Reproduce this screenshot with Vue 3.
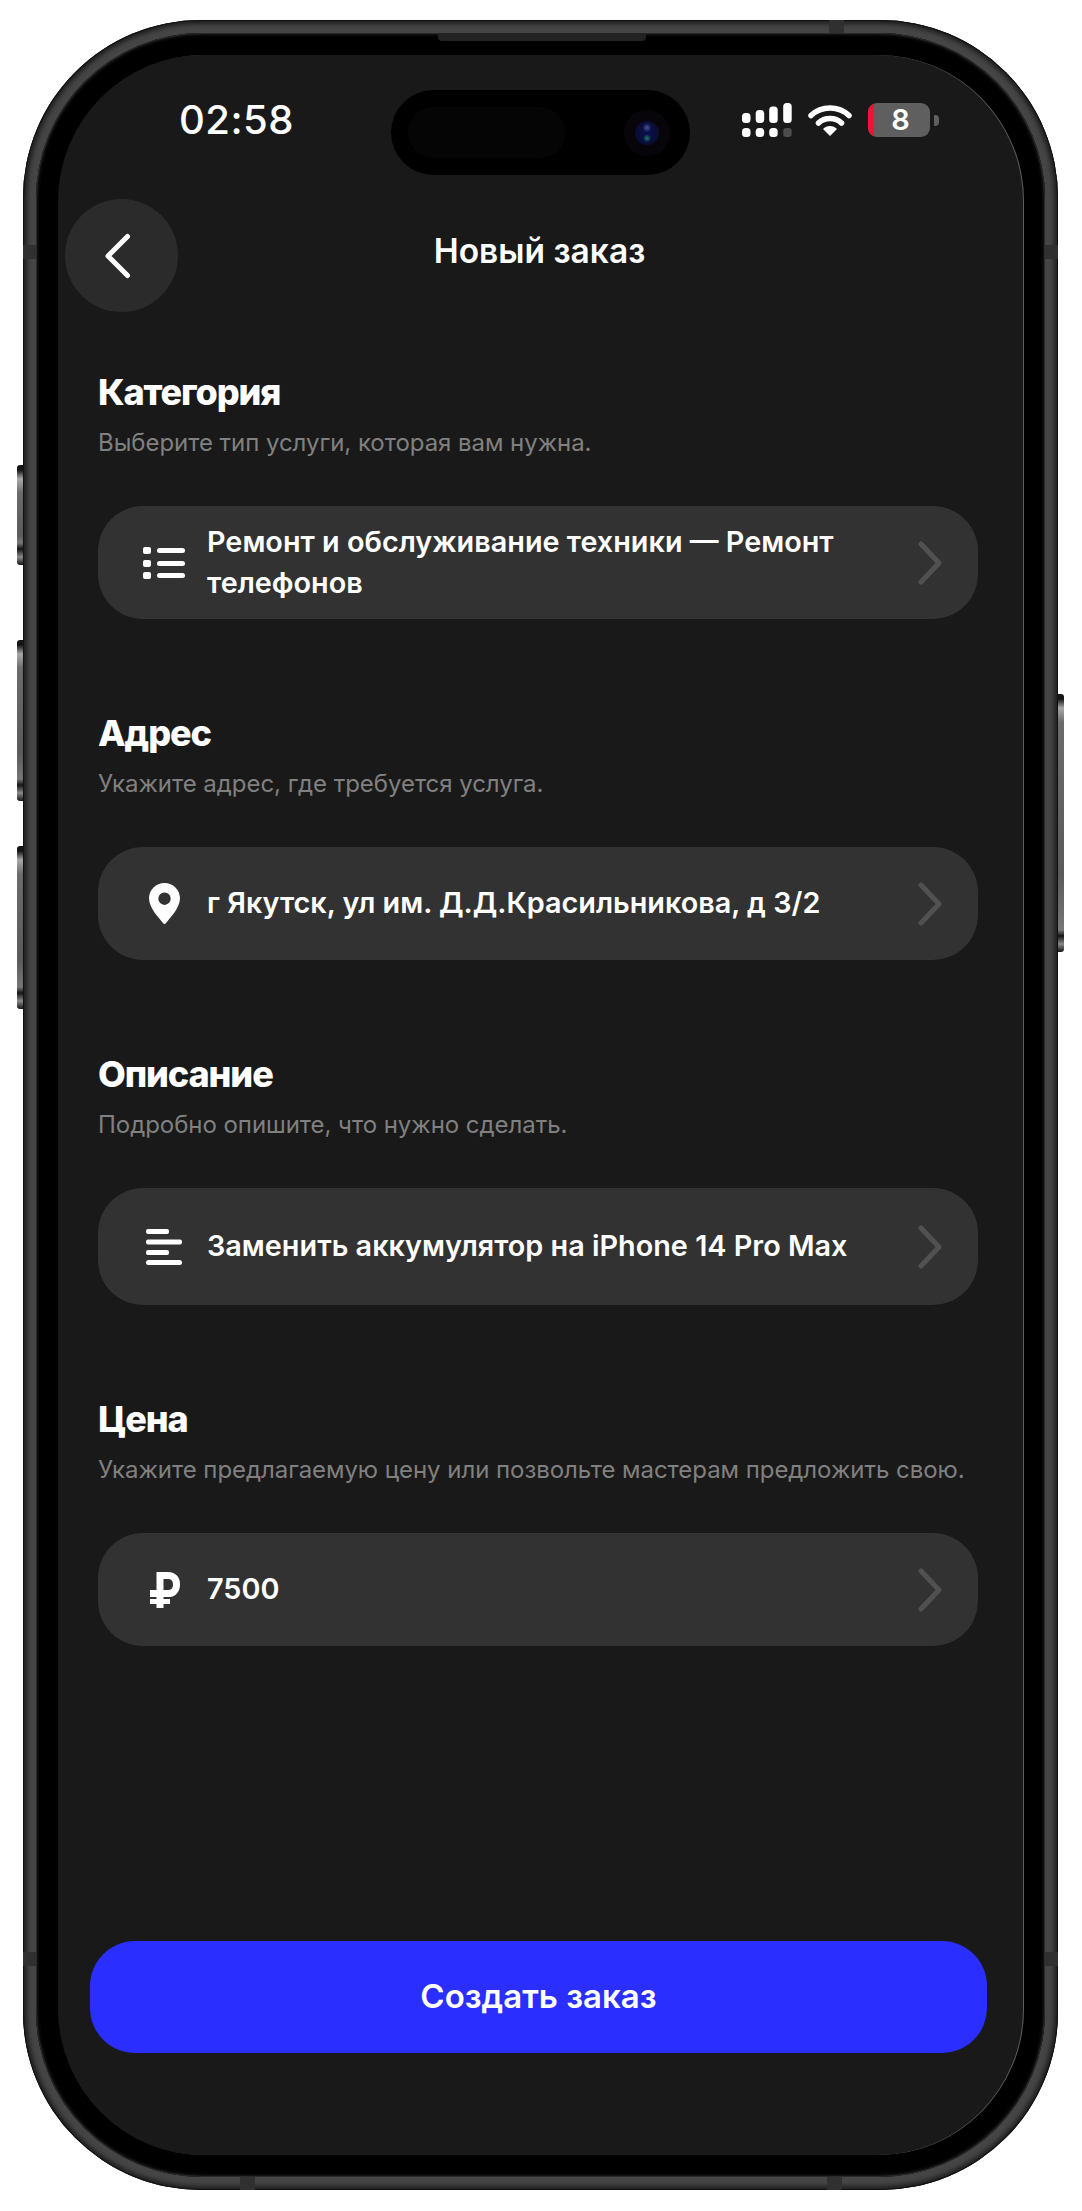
<template>
  <div class="page">
    <div class="phone">
      <span class="side side-l b1"></span>
      <span class="side side-l b2"></span>
      <span class="side side-l b3"></span>
      <span class="side side-r b4"></span>
      <span class="band v tl"></span>
      <span class="band v tr"></span>
      <span class="band v bl"></span>
      <span class="band v br"></span>
      <span class="band h top"></span>
      <span class="band h bot1"></span>
      <span class="band h bot2"></span>
      <span class="speaker"></span>

      <div class="bezel">
        <div class="screen">
          <div class="island">
            <span class="island-left"></span>
            <span class="lens"><span class="lens-in"></span></span>
          </div>

          <div class="status">
            <span class="time">02:58</span>
            <div class="status-right">
              <svg class="signal" width="50" height="34" viewBox="0 0 50 34">
                <g fill="#fff">
                  <rect x="0" y="10" width="8.500" height="10" rx="3.500" />
                  <rect x="13.700" y="7" width="8.500" height="13" rx="3.500" />
                  <rect x="27.200" y="3.500" width="8.500" height="16.500" rx="3.500" />
                  <rect x="41.200" y="0" width="8.500" height="20" rx="3.500" />
                  <rect x="0" y="25" width="8.500" height="9" rx="3.500" />
                  <rect x="13.700" y="25" width="8.500" height="9" rx="3.500" />
                  <rect x="27.200" y="25" width="8.500" height="9" rx="3.500" />
                  <rect x="41.200" y="25" width="8.500" height="9" rx="3" fill="#4c4c4c" />
                </g>
              </svg>
              <svg class="wifi" width="44" height="32" viewBox="0 0 44 32">
                <path d="M3 11.500C13.500 1.500 30.500 1.500 41 11.500" fill="none" stroke="#fff" stroke-width="5.500" stroke-linecap="round" />
                <path d="M10.500 19C16.500 13 27.500 13 33.500 19" fill="none" stroke="#fff" stroke-width="5.500" stroke-linecap="round" />
                <path d="M15 25C18.500 21 25.500 21 29 25L22 32Z" fill="#fff" />
              </svg>
              <div class="battery">
                <div class="battery-body"><span class="battery-red"></span>8</div>
                <span class="battery-tip"></span>
              </div>
            </div>
          </div>

          <div class="header">
            <button class="back">
              <svg width="28" height="46" viewBox="0 0 28 46">
                <path d="M24.500 3.500L5 23L24.500 42.500" fill="none" stroke="#fff" stroke-width="5" stroke-linecap="round" stroke-linejoin="round" />
              </svg>
            </button>
            <div class="title">Новый заказ</div>
          </div>

          <div class="form">
            <div v-for="s in sections" :key="s.title" class="section">
              <h2>{{ s.title }}</h2>
              <p>{{ s.hint }}</p>
              <div class="card" :class="{ tall: s.icon === 'text' }">
                <span class="icon">
                  <svg v-if="s.icon === 'list'" width="42" height="32" viewBox="0 0 42 32">
                    <g fill="#fff">
                      <rect x="0" y="0" width="8" height="7" rx="2" />
                      <rect x="0" y="13" width="8" height="7" rx="2" />
                      <rect x="0" y="25" width="8" height="7" rx="2" />
                      <rect x="14" y="1" width="28" height="5" rx="2.500" />
                      <rect x="14" y="14" width="28" height="5" rx="2.500" />
                      <rect x="14" y="26" width="28" height="5" rx="2.500" />
                    </g>
                  </svg>
                  <svg v-else-if="s.icon === 'pin'" width="31" height="41" viewBox="0 0 31 41">
                    <path fill="#fff" fill-rule="evenodd" d="M15.500 0C7 0 0 6.800 0 15.300C0 25.500 11 36 14 40C14.800 41.200 16.200 41.200 17 40C20 36 31 25.500 31 15.300C31 6.800 24 0 15.500 0ZM15.500 9.500A6.200 6.200 0 1 1 15.500 21.900A6.200 6.200 0 1 1 15.500 9.500Z" />
                  </svg>
                  <svg v-else-if="s.icon === 'text'" width="36" height="36" viewBox="0 0 36 36">
                    <g fill="#fff">
                      <rect x="0" y="0" width="23" height="5" rx="2" />
                      <rect x="0" y="10.500" width="36" height="5" rx="2" />
                      <rect x="0" y="21" width="23" height="5" rx="2" />
                      <rect x="0" y="31" width="36" height="5" rx="2.500" />
                    </g>
                  </svg>
                  <svg v-else width="31" height="36" viewBox="0 0 31 36">
                    <path d="M11 36V3.500H19C25 3.500 27.500 7.500 27.500 12.500C27.500 17.500 25 21.500 19 21.500H1" fill="none" stroke="#fff" stroke-width="7" />
                    <path d="M1 29.500H21" fill="none" stroke="#fff" stroke-width="5" />
                  </svg>
                </span>
                <span class="value">{{ s.value }}</span>
                <svg class="arrow" width="24" height="44" viewBox="0 0 24 44">
                  <path d="M3 3L21 22L3 41" fill="none" stroke="#515151" stroke-width="5" stroke-linecap="round" stroke-linejoin="round" />
                </svg>
              </div>
            </div>
          </div>

          <button class="submit">Создать заказ</button>
        </div>
      </div>
    </div>
  </div>
</template>

<script setup>
const sections = [
  {
    title: 'Категория',
    hint: 'Выберите тип услуги, которая вам нужна.',
    value: 'Ремонт и обслуживание техники — Ремонт телефонов',
    icon: 'list'
  },
  {
    title: 'Адрес',
    hint: 'Укажите адрес, где требуется услуга.',
    value: 'г Якутск, ул им. Д.Д.Красильникова, д 3/2',
    icon: 'pin'
  },
  {
    title: 'Описание',
    hint: 'Подробно опишите, что нужно сделать.',
    value: 'Заменить аккумулятор на iPhone 14 Pro Max',
    icon: 'text'
  },
  {
    title: 'Цена',
    hint: 'Укажите предлагаемую цену или позвольте мастерам предложить свою.',
    value: '7500',
    icon: 'ruble'
  }
]
</script>

<style>
html, body {
  margin: 0;
  background: #fff;
}
</style>

<style scoped>
.page {
  width: 1082px;
  height: 2211px;
  padding: 20px 24px 21px 23px;
  box-sizing: border-box;
  font-family: Inter, "Noto Sans", sans-serif;
  color: #fff;
}

.phone {
  position: relative;
  height: 100%;
  padding: 13px;
  box-sizing: border-box;
  border-radius: 178px;
  background: #454545;
  box-shadow: inset 0 0 0 1px #111, inset 0 0 4px 4px #202020;
}

.bezel {
  height: 100%;
  padding: 22px 21px 22px 22px;
  box-sizing: border-box;
  border-radius: 166px;
  background: #000;
  box-shadow: inset 0 0 0 1px #2a2a2a, inset 0 0 3px 2px #181818;
}

.screen {
  position: relative;
  display: flex;
  flex-direction: column;
  height: 100%;
  border-radius: 146px;
  background: #191919;
  overflow: hidden;
  box-shadow: inset -1px 0 0 #5c5c5c;
}

.side {
  position: absolute;
  width: 6px;
  background:
    linear-gradient(#151515 0, #151515 5px, #a9a9a9 14px, #6b6b6b 28px, #5a5a5a 70%, #777 calc(100% - 22px), #151515 calc(100% - 16px), #8a8a8a calc(100% - 8px), #151515 100%);
}

.side-l {
  left: -6px;
  border-radius: 3px 0 0 3px;
}

.side-r {
  right: -6px;
  border-radius: 0 3px 3px 0;
}

.b1 { top: 445px; height: 100px; }
.b2 { top: 620px; height: 161px; }
.b3 { top: 826px; height: 163px; }
.b4 { top: 674px; height: 258px; }

.band {
  position: absolute;
  background: #303030;
}

.band.v {
  width: 13px;
  height: 14px;
}

.band.h {
  width: 15px;
  height: 13px;
}

.tl { left: 0; top: 225px; }
.tr { right: 0; top: 225px; }
.bl { left: 0; bottom: 224px; }
.br { right: 0; bottom: 224px; }
.top { left: 806px; top: 0; }
.bot1 { left: 217px; bottom: 0; }
.bot2 { left: 804px; bottom: 0; }

.speaker {
  position: absolute;
  left: 415px;
  top: 13px;
  width: 208px;
  height: 8px;
  border-radius: 0 0 4px 4px;
  background: #222;
}

.island {
  position: absolute;
  left: 333px;
  top: 35px;
  width: 299px;
  height: 85px;
  border-radius: 43px;
  background: #000;
}

.island-left {
  position: absolute;
  left: 17px;
  top: 17px;
  width: 157px;
  height: 51px;
  border-radius: 25px;
  background: #050505;
}

.lens {
  position: absolute;
  left: 233px;
  top: 20px;
  width: 46px;
  height: 46px;
  border-radius: 50%;
  background: #07050a;
}

.lens-in {
  position: absolute;
  left: 11px;
  top: 11px;
  width: 24px;
  height: 24px;
  border-radius: 50%;
  background:
    radial-gradient(circle at 50% 28%, #4a4fa0 0, transparent 22%),
    radial-gradient(circle at 50% 72%, #1a7a68 0, transparent 20%),
    radial-gradient(circle, #0a1050 0, #0a0d33 65%, #0a0a1c 100%);
}

.status {
  display: flex;
  justify-content: space-between;
  align-items: center;
  padding: 48px 85px 0 121px;
}

.time {
  font-size: 40px;
  font-weight: 500;
  line-height: 34px;
  letter-spacing: 0.5px;
}

.status-right {
  display: flex;
  align-items: center;
}

.signal {
  display: block;
}

.wifi {
  display: block;
  margin-left: 16px;
}

.battery {
  display: flex;
  align-items: center;
  margin-left: 16px;
}

.battery-body {
  position: relative;
  width: 62px;
  height: 34px;
  padding-left: 3px;
  box-sizing: border-box;
  border-radius: 9px;
  overflow: hidden;
  background: #5f5f5f;
  font-size: 29px;
  font-weight: 600;
  line-height: 34px;
  text-align: center;
}

.battery-red {
  position: absolute;
  left: 0;
  top: 0;
  bottom: 0;
  width: 6px;
  background: #f5103a;
}

.battery-tip {
  width: 5px;
  height: 11px;
  margin-left: 4px;
  border-radius: 0 4px 4px 0;
  background: #5f5f5f;
}

.header {
  display: grid;
  grid-template-columns: 113px 1fr 113px;
  align-items: center;
  margin-top: 62px;
  padding: 0 10px 0 7px;
}

.back {
  display: flex;
  align-items: center;
  justify-content: center;
  width: 113px;
  height: 113px;
  padding: 0 10px 0 0;
  border: none;
  border-radius: 50%;
  background: #2b2b2b;
}

.title {
  margin-bottom: 9px;
  font-size: 33.500px;
  font-weight: 600;
  text-align: center;
}

.form {
  display: flex;
  flex-direction: column;
  gap: 93px;
  padding: 59px 46px 0 40px;
}

.section h2 {
  margin: 0;
  font-size: 36px;
  font-weight: 800;
  line-height: 42px;
  letter-spacing: -1.1px;
}

.section p {
  margin: 14px 0 47px;
  color: #808080;
  font-size: 24px;
  font-weight: 400;
  line-height: 32px;
  letter-spacing: -0.05px;
}

.card {
  display: flex;
  align-items: center;
  height: 113px;
  padding: 0 36px 0 42px;
  box-sizing: border-box;
  border-radius: 45px;
  background: #323232;
}

.card.tall {
  height: 117px;
}

.icon {
  display: flex;
  align-items: center;
  justify-content: center;
  flex: none;
  width: 48px;
}

.value {
  flex: 1;
  margin: 0 0 2px 19px;
  padding-right: 40px;
  font-size: 28.800px;
  font-weight: 600;
  line-height: 41px;
}

.arrow {
  flex: none;
}

.submit {
  display: block;
  width: 897px;
  height: 112px;
  margin: auto 0 102px 32px;
  padding-bottom: 3px;
  border: none;
  border-radius: 45px;
  background: #2a2eff;
  color: #fff;
  font-family: inherit;
  font-size: 33px;
  font-weight: 600;
}
</style>
